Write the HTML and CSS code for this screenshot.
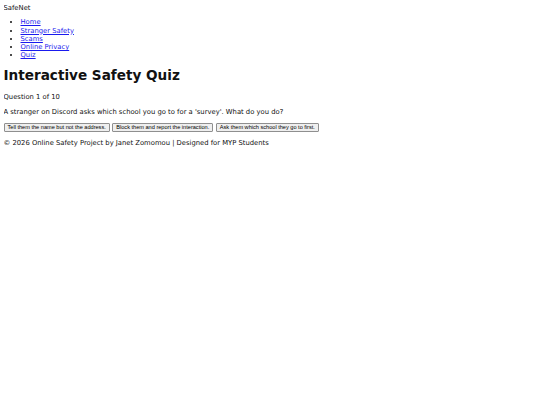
FILE: index.html
```html
<!DOCTYPE html>
<html lang="en">
<head>
<meta charset="utf-8">
<title>SafeNet - Interactive Safety Quiz</title>
<link rel="stylesheet" href="styles.css">
</head>
<body>
<header class="site-header">
  <div class="logo">SafeNet</div>
  <nav>
    <ul class="nav-list">
      <li><a href="#">Home</a></li>
      <li><a href="#">Stranger Safety</a></li>
      <li><a href="#">Scams</a></li>
      <li><a href="#">Online Privacy</a></li>
      <li><a href="#">Quiz</a></li>
    </ul>
  </nav>
</header>
<main class="quiz">
  <h1 class="quiz-title">Interactive Safety Quiz</h1>
  <p class="quiz-progress">Question 1 of 10</p>
  <p class="quiz-question">A stranger on Discord asks which school you go to for a 'survey'. What do you do?</p>
  <div class="quiz-options">
    <button class="option">Tell them the name but not the address.</button>
    <button class="option">Block them and report the interaction.</button>
    <button class="option">Ask them which school they go to first.</button>
  </div>
</main>
<footer class="site-footer">
  <p>© 2026 Online Safety Project by Janet Zomomou | Designed for MYP Students</p>
</footer>
</body>
</html>
```
FILE: styles.css
```css
html {
  font-size: 6.8px;
}
body {
  margin: 3.5px;
  font-family: "DejaVu Sans", Verdana, sans-serif;
  font-size: 1rem;
  line-height: 1.2;
  color: #111;
  background: #fff;
}
.nav-list {
  margin: 1em 0;
  padding-left: 17px;
}
.nav-list a {
  color: #1a1aee;
}
.quiz-title {
  font-size: 2em;
  margin: 0.67em 0;
  line-height: 1.15;
}
.quiz-progress,
.quiz-question,
.site-footer p {
  margin: 1em 0;
}
.quiz-options {
  display: flex;
  gap: 2.5px;
}
.option {
  font-family: "Liberation Sans", Arial, sans-serif;
  font-size: 5.6px;
  line-height: 1.15;
  padding: 0.5px 3px;
  margin: 0;
  border: 1px solid #8f8f8f;
  border-radius: 1px;
  background: #efefef;
  color: #000;
}
```
